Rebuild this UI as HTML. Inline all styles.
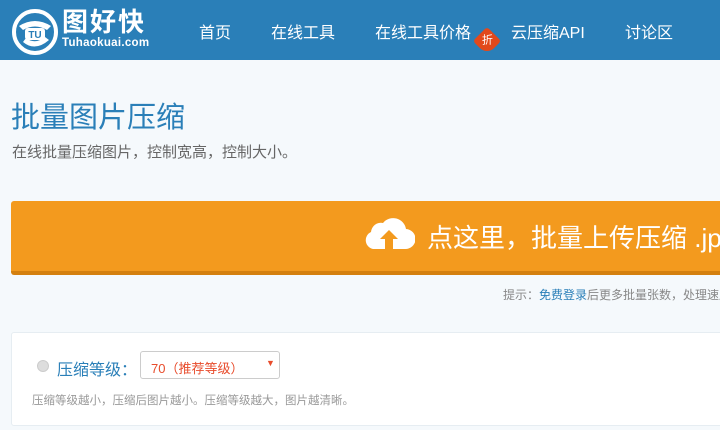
<!DOCTYPE html>
<html><head><meta charset="utf-8"><style>
*{margin:0;padding:0;box-sizing:border-box}
body{width:720px;height:430px;overflow:hidden;background:#f5f9fc;font-family:"Liberation Sans","Noto Sans CJK SC",sans-serif;position:relative}
.hd{position:absolute;left:0;top:0;width:720px;height:60px;background:#2a7fb8}
.nav{position:absolute;top:19px;color:#fff;font-size:16px;white-space:nowrap}
.abs{position:absolute;white-space:nowrap}
</style></head><body>
<div class="hd">
<svg class="abs" style="left:11px;top:8px" width="48" height="48" viewBox="0 0 48 48">
<circle cx="24" cy="24" r="21" fill="none" stroke="#fff" stroke-width="4"/>
<path d="M8 18 Q24 8 40 18 L36 22 Q24 15 12 22Z" fill="#fff"/>
<path d="M12 34 Q24 44 38 32 L34 29 Q24 37 15 30Z" fill="#fff"/>
<rect x="14" y="20" width="20" height="12" rx="3" fill="#fff"/>
<text x="24" y="30" font-size="10" font-weight="bold" fill="#2a7fb8" text-anchor="middle" font-family="Liberation Sans">TU</text>
</svg>
<div class="abs" style="left:62px;top:6px;color:#fff;font-size:26px;line-height:32px;font-weight:bold;letter-spacing:2px">图好快</div>
<div class="abs" style="left:62px;top:37px;color:#fff;font-size:11.5px;line-height:13px;font-weight:bold;letter-spacing:0.3px">Tuhaokuai.com</div>
<div class="nav" style="left:199px">首页</div>
<div class="nav" style="left:271px">在线工具</div>
<div class="nav" style="left:375px">在线工具价格</div>
<div class="abs" style="left:477px;top:31px;width:20px;height:20px;background:#e2491b;border-radius:3px 3px 3px 10px;transform:rotate(-45deg);color:#fff;font-size:11px;text-align:center;line-height:20px"><span style="display:inline-block;transform:rotate(45deg)">折</span></div>
<div class="nav" style="left:511px">云压缩API</div>
<div class="nav" style="left:625px">讨论区</div>
</div>
<div class="abs" style="left:11px;top:94px;font-size:29px;color:#2a7fb8">批量图片压缩</div>
<div class="abs" style="left:12px;top:141px;font-size:15px;color:#666">在线批量压缩图片，控制宽高，控制大小。</div>
<div class="abs" style="left:11px;top:201px;width:720px;height:74px;background:#f39a1e;border-bottom:4px solid #d4800f;border-radius:3px 0 0 3px"></div>
<svg class="abs" style="left:363px;top:213px" width="52" height="38" viewBox="0 0 52 38">
<path d="M10 36 A9 9 0 0 1 8 19 A10 10 0 0 1 20 10 A13 13 0 0 1 43 16 A10 10 0 0 1 42 36Z" fill="#fff"/>
<path d="M26 17 L35 26 L30 26 L30 36 L22 36 L22 26 L17 26Z" fill="#f39a1e"/>
</svg>
<div class="abs" style="left:427px;top:218px;font-size:26px;color:#fff">点这里，批量上传压缩 .jpg</div>
<div class="abs" style="left:503px;top:286px;font-size:12px;color:#888">提示：<span style="color:#2a7fb8">免费登录</span>后更多批量张数，处理速度更快</div>
<div class="abs" style="left:11px;top:332px;width:720px;height:94px;background:#fff;border:1px solid #e6edf2;border-radius:3px"></div>
<div class="abs" style="left:37px;top:360px;width:12px;height:12px;border-radius:50%;background:#ddd;border:1px solid #ccc"></div>
<div class="abs" style="left:57px;top:356px;font-size:16px;color:#2a7fb8">压缩等级：</div>
<div class="abs" style="left:140px;top:351px;width:140px;height:28px;border:1px solid #ccc;border-radius:3px;background:#fff"></div>
<div class="abs" style="left:151px;top:358px;font-size:13px;color:#e84c2c">70（推荐等级）</div>
<div class="abs" style="left:266px;top:358px;font-size:9px;color:#e84c2c">▼</div>
<div class="abs" style="left:32px;top:392px;font-size:11.5px;color:#999">压缩等级越小，压缩后图片越小。压缩等级越大，图片越清晰。</div>
</body></html>
